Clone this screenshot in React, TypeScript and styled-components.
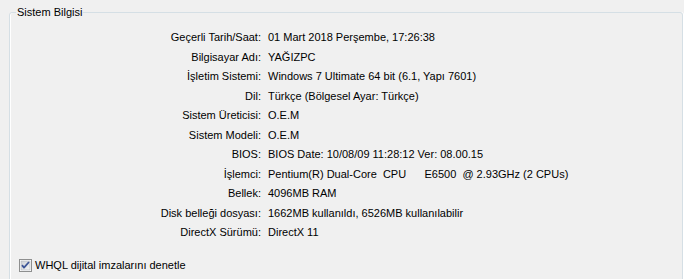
import React from "react";
import styled, { createGlobalStyle } from "styled-components";

const GlobalStyle = createGlobalStyle`
  html, body {
    margin: 0;
    padding: 0;
    background: #f0f0f0;
  }
  body {
    font-family: "Liberation Sans", Arial, sans-serif;
    font-size: 11px;
    color: #000;
    overflow: hidden;
  }
`;

const Page = styled.div`
  width: 684px;
  height: 279px;
  overflow: hidden;
  background: #f0f0f0;
`;

const GroupBox = styled.fieldset`
  margin: 6px 1px 0 9px;
  padding: 0 0 40px 6px;
  border: 1px solid #d5dfe5;
  border-radius: 3px;
  box-shadow: inset 1px 0 0 #fff, 1px 0 0 #fff;
  min-height: 300px;
`;

const Legend = styled.legend`
  padding: 0 1px;
  line-height: 12px;
`;

const InfoGrid = styled.div`
  display: grid;
  grid-template-columns: 245px 1fr;
  grid-auto-rows: 19.5px;
  column-gap: 7px;
  padding-top: 9.5px;
  align-items: center;
`;

const Label = styled.div`
  text-align: right;
  white-space: nowrap;
`;

const Value = styled.div`
  white-space: pre;
`;

const CheckRow = styled.label`
  display: flex;
  align-items: center;
  gap: 3px;
  margin: 17px 0 0 3px;
  line-height: 13px;
`;

const Box = styled.span`
  display: inline-flex;
  width: 13px;
  height: 13px;
`;

const rows: [string, string][] = [
  ["Geçerli Tarih/Saat:", "01 Mart 2018 Perşembe, 17:26:38"],
  ["Bilgisayar Adı:", "YAĞIZPC"],
  ["İşletim Sistemi:", "Windows 7 Ultimate 64 bit (6.1, Yapı 7601)"],
  ["Dil:", "Türkçe (Bölgesel Ayar: Türkçe)"],
  ["Sistem Üreticisi:", "O.E.M"],
  ["Sistem Modeli:", "O.E.M"],
  ["BIOS:", "BIOS Date: 10/08/09 11:28:12 Ver: 08.00.15"],
  ["İşlemci:", "Pentium(R) Dual-Core  CPU      E6500  @ 2.93GHz (2 CPUs)"],
  ["Bellek:", "4096MB RAM"],
  ["Disk belleği dosyası:", "1662MB kullanıldı, 6526MB kullanılabilir"],
  ["DirectX Sürümü:", "DirectX 11"],
];

const CheckIcon = () => (
  <svg width="13" height="13" viewBox="0 0 13 13">
    <defs>
      <linearGradient id="cbg" x1="0" y1="0" x2="1" y2="1">
        <stop offset="0" stopColor="#cbcfd5" />
        <stop offset="1" stopColor="#f6f6f6" />
      </linearGradient>
    </defs>
    <rect x="0.5" y="0.5" width="12" height="12" fill="#fff" stroke="#8e8f8f" />
    <rect x="2" y="2" width="9" height="9" fill="url(#cbg)" stroke="#aeb3b9" strokeWidth="0.6" />
    <path
      d="M3 6.2 L5 8.6 L10 3"
      fill="none"
      stroke="#3d5597"
      strokeWidth="1.8"
      strokeLinejoin="round"
    />
  </svg>
);

export default function App() {
  return (
    <Page>
      <GlobalStyle />
      <GroupBox>
        <Legend>Sistem Bilgisi</Legend>
        <InfoGrid>
          {rows.map(([label, value]) => (
            <React.Fragment key={label}>
              <Label>{label}</Label>
              <Value>{value}</Value>
            </React.Fragment>
          ))}
        </InfoGrid>
        <CheckRow>
          <Box>
            <CheckIcon />
          </Box>
          WHQL dijital imzalarını denetle
        </CheckRow>
      </GroupBox>
    </Page>
  );
}
